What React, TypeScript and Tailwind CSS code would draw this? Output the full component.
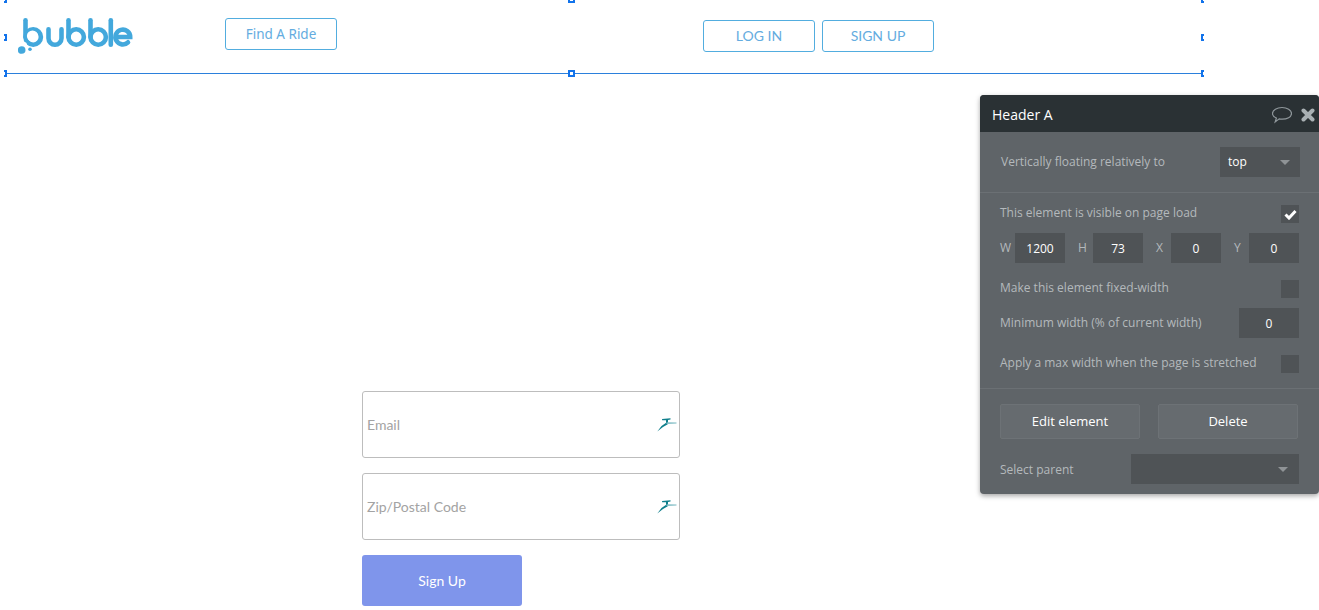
const BubbleLogo = () => (
  <svg width="116" height="38" viewBox="0 0 116 38" className="shrink-0">
    <g fill="none" stroke="#43a8dc" strokeWidth="4.6" strokeLinecap="round">
      {/* b */}
      <path d="M7.5 3.3 V20" />
      <circle cx="15.2" cy="20" r="7.7" />
      {/* u */}
      <path d="M30.5 12.3 V21.2 a6.5 6.5 0 0 0 13 0 V12.3" />
      {/* b */}
      <path d="M50.5 3.3 V20" />
      <circle cx="58.2" cy="20" r="7.7" />
      {/* b */}
      <path d="M72.5 3.3 V20" />
      <circle cx="80.2" cy="20" r="7.7" />
      {/* l */}
      <path d="M92.8 3.3 V27.7" />
      {/* e */}
      <path d="M97.4 20 H112.2 a7.4 7.4 0 1 0 -2.2 5.3" />
    </g>
    <circle cx="14.5" cy="19" r="5.6" fill="#fff" />
    <circle cx="6" cy="28" r="3" fill="#fff" />
    <circle cx="3.7" cy="33" r="3.8" fill="#43a8dc" />
    <circle cx="12" cy="32.3" r="1.8" fill="#43a8dc" />
  </svg>
);

const BirdIcon = () => (
  <svg width="20" height="14" viewBox="0 0 20 14" className="shrink-0">
    <path d="M0.3 13.5 L4.5 8 L9.5 4.4 L10.8 6.2 L6 9 Z" fill="#0f7f8c" />
    <path d="M5 1 L13.5 0.3 L13.5 1.6 L11 2.1 L11 5.2 L9 5.2 L9 2.2 L5.2 2.2 Z" fill="#0f7f8c" />
    <path d="M9.5 4.2 L19.5 4.4 L19.5 5.6 L9.5 6 Z" fill="#7fbcc4" />
  </svg>
);

const Handle = ({ className }: { className: string }) => (
  <div className={`absolute h-[7px] bg-white border-[#1273eb] ${className}`} />
);

const OutlineButton = ({ label, className }: { label: string; className: string }) => (
  <div
    className={`w-[112px] h-[32px] flex items-center justify-center rounded-[3px] border border-[#52addf] text-[#64ace0] ${className}`}
  >
    {label}
  </div>
);

const Field = ({ label }: { label: string }) => (
  <div className="w-[318px] h-[67px] pl-[4px] pr-[2px] flex items-center justify-between rounded-[3px] border border-[#bdbdbd] bg-white">
    <span className="text-[14px] text-[#a3a3a3]">{label}</span>
    <BirdIcon />
  </div>
);

const Check = ({ checked }: { checked?: boolean }) => (
  <div className="w-[18px] h-[18px] bg-[#4f5356] flex items-center justify-center">
    {checked && (
      <svg width="13" height="11" viewBox="0 0 13 11">
        <path d="M1.5 5.5 L5 9 L11.5 2" fill="none" stroke="#fff" strokeWidth="3" />
      </svg>
    )}
  </div>
);

const NumberBox = ({ value, className }: { value: string; className: string }) => (
  <div
    className={`h-[30px] pt-[1px] bg-[#4f5356] flex items-center justify-center text-[12px] text-white ${className}`}
  >
    {value}
  </div>
);

const Caret = () => <div className="w-0 h-0 border-x-[5px] border-x-transparent border-t-[5px] border-t-[#8f9396]" />;

const PropertyPanel = () => (
  <div
    className="absolute left-[980px] top-[95px] w-[339px] h-[399px] rounded-[4px] overflow-hidden bg-[#5f6468] shadow-[0_2px_5px_rgba(0,0,0,0.35)] text-[12px] text-[#b4b9bc]"
    style={{ fontFamily: '"Open Sans", sans-serif' }}
  >
    <div className="h-[37px] bg-[#2a3134] pl-[12px] pr-[4px] pt-[2px] flex items-center justify-between">
      <span className="text-[14px] text-white">Header A</span>
      <div className="flex items-center gap-[9px]">
        <svg width="20" height="18" viewBox="0 0 20 18">
          <path
            d="M10 1.5 C15 1.5 19.5 4 19.5 7.5 C19.5 11 15 13.2 10 13.2 C9 13.2 8 13.1 7.2 12.9 L3.2 16 L4.4 12 C2 11 0.5 9.5 0.5 7.5 C0.5 4 5 1.5 10 1.5 Z"
            fill="none"
            stroke="#8f979b"
            strokeWidth="1.2"
          />
        </svg>
        <svg width="14" height="14" viewBox="0 0 14 14">
          <path d="M2.5 2.5 L11.5 11.5 M11.5 2.5 L2.5 11.5" stroke="#a9b0b3" strokeWidth="4" strokeLinecap="round" />
        </svg>
      </div>
    </div>

    <div className="h-[61px] pl-[21px] pr-[19px] pb-[1px] flex items-center justify-between border-b border-[#6b7074]">
      <span>Vertically floating relatively to</span>
      <div className="w-[80px] h-[30px] pt-[1px] bg-[#4f5356] pl-[8px] pr-[10px] flex items-center justify-between text-white">
        top
        <Caret />
      </div>
    </div>

    <div className="h-[196px] pl-[20px] pr-[20px] pt-[12px] border-b border-[#6b7074]">
      <div className="h-[18px] flex items-center justify-between">
        <span className="-mt-[2px]">This element is visible on page load</span>
        <Check checked />
      </div>
      <div className="mt-[10px] flex items-center justify-between">
        <span className="w-[15px]">W</span>
        <NumberBox value="1200" className="w-[50px]" />
        <span className="ml-[13px] w-[15px]">H</span>
        <NumberBox value="73" className="w-[50px]" />
        <span className="ml-[13px] w-[15px]">X</span>
        <NumberBox value="0" className="w-[50px]" />
        <span className="ml-[13px] w-[15px]">Y</span>
        <NumberBox value="0" className="w-[50px]" />
      </div>
      <div className="mt-[17px] h-[18px] flex items-center justify-between">
        <span className="-mt-[2px]">Make this element fixed-width</span>
        <Check />
      </div>
      <div className="mt-[10px] flex items-center justify-between">
        <span>Minimum width (% of current width)</span>
        <NumberBox value="0" className="w-[60px]" />
      </div>
      <div className="mt-[17px] h-[18px] flex items-center justify-between">
        <span className="-mt-[2px]">Apply a max width when the page is stretched</span>
        <Check />
      </div>
    </div>

    <div className="pl-[20px] pr-[21px] pt-[15px] flex justify-between text-[13px] text-white">
      <div className="w-[140px] h-[35px] flex items-center justify-center rounded-[2px] border border-[#6d7276] bg-[#666b6f]">
        Edit element
      </div>
      <div className="w-[140px] h-[35px] flex items-center justify-center rounded-[2px] border border-[#6d7276] bg-[#666b6f]">
        Delete
      </div>
    </div>

    <div className="mt-[15px] pl-[20px] pr-[20px] flex items-center justify-between">
      <span className="mt-[1px]">Select parent</span>
      <div className="w-[168px] h-[30px] bg-[#4f5356] pr-[11px] flex items-center justify-end">
        <Caret />
      </div>
    </div>
  </div>
);

const App = () => {
  return (
    <div className="relative w-[1319px] h-[610px] overflow-hidden bg-white" style={{ fontFamily: 'Lato, sans-serif' }}>
      {/* Selected header with its resize handles */}
      <div className="relative ml-[5px] w-[1197px] h-[74px] border-b border-[#2b80dc]">
        <div className="flex items-start">
          <div className="ml-[13px] mt-[17px]">
            <BubbleLogo />
          </div>
          <OutlineButton
            label="Find A Ride"
            className="ml-[91px] mt-[18px] text-[13.5px] font-['Noto_Sans',sans-serif]"
          />
          <OutlineButton label="LOG IN" className="ml-[366px] mt-[20px] pb-[1px] text-[14px]" />
          <OutlineButton label="SIGN UP" className="ml-[7px] mt-[20px] pb-[1px] text-[14px]" />
        </div>
        <Handle className="left-[-1px] top-[-4px] w-[3px] border-y-2 border-r-2" />
        <Handle className="left-[563px] top-[-4px] w-[7px] border-2" />
        <Handle className="left-[1196px] top-[-4px] w-[3px] border-y-2 border-l-2" />
        <Handle className="left-[-1px] top-[34px] w-[3px] border-y-2 border-r-2" />
        <Handle className="left-[1196px] top-[34px] w-[3px] border-y-2 border-l-2" />
        <Handle className="left-[-1px] top-[70px] w-[3px] border-y-2 border-r-2" />
        <Handle className="left-[563px] top-[70px] w-[7px] border-2" />
        <Handle className="left-[1196px] top-[70px] w-[3px] border-y-2 border-l-2" />
      </div>

      <div className="ml-[362px] mt-[317px] flex flex-col">
        <Field label="Email" />
        <div className="mt-[15px]">
          <Field label="Zip/Postal Code" />
        </div>
        <div className="mt-[15px] w-[160px] h-[51px] flex items-center justify-center rounded-[3px] bg-[#7f95eb] text-[14px] text-white">
          Sign Up
        </div>
      </div>

      <PropertyPanel />
    </div>
  );
};

export default App;
